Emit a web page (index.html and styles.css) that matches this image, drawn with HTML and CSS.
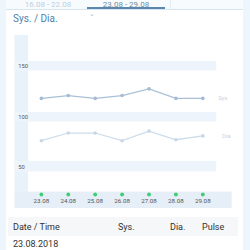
FILE: index.html
```html
<!DOCTYPE html>
<html>
<head>
<meta charset="utf-8">
<link rel="stylesheet" href="styles.css">
</head>
<body>
<div class="panel">
  <div class="tabs">
    <div class="tab">16.08 - 22.08</div>
    <div class="tab active">23.08 - 29.08</div>
    <div class="tab-rest"></div>
  </div>
  <div class="selector">
    <span class="sel-label">Sys. / Dia.</span>
    <span class="chev">&#711;</span>
  </div>
  <svg class="chart" width="237" height="182" viewBox="0 0 237 182">
    <rect x="4" y="0" width="14" height="166" fill="#e8f2fb"/>
    <rect x="4" y="27" width="210" height="10" fill="#edf4fb"/>
    <rect x="4" y="80" width="210" height="10" fill="#edf4fb"/>
    <rect x="4" y="131" width="210" height="11" fill="#edf4fb"/>
    <text x="8" y="34" class="ylab">150</text>
    <text x="8" y="87" class="ylab">100</text>
    <text x="8" y="139" class="ylab">50</text>
    <rect x="4" y="163" width="226" height="17" fill="#e6eff8"/>
    <polyline points="32,66 60,63 88,66 116,63 144,56 172,66 200,66" fill="none" stroke="#a9c0d6" stroke-width="1.3"/>
    <g fill="#a3bbd3">
      <circle cx="32" cy="66" r="1.9"/><circle cx="60" cy="63" r="1.9"/><circle cx="88" cy="66" r="1.9"/>
      <circle cx="116" cy="63" r="1.9"/><circle cx="144" cy="56" r="1.9"/><circle cx="172" cy="66" r="1.9"/><circle cx="200" cy="66" r="1.9"/>
    </g>
    <text x="216" y="68" class="slab">Sys</text>
    <polyline points="32,110 60,102 88,102 116,110 144,100 172,109 200,105" fill="none" stroke="#cddcea" stroke-width="1.3"/>
    <g fill="#c6d7e7">
      <circle cx="32" cy="110" r="1.9"/><circle cx="60" cy="102" r="1.9"/><circle cx="88" cy="102" r="1.9"/>
      <circle cx="116" cy="110" r="1.9"/><circle cx="144" cy="100" r="1.9"/><circle cx="172" cy="109" r="1.9"/><circle cx="200" cy="105" r="1.9"/>
    </g>
    <text x="220" y="107" class="dlab">Dia</text>
    <g fill="#3fcf72">
      <circle cx="32" cy="166" r="2"/><circle cx="60" cy="166" r="2"/><circle cx="88" cy="166" r="2"/>
      <circle cx="116" cy="166" r="2"/><circle cx="144" cy="166" r="2"/><circle cx="172" cy="166" r="2"/><circle cx="200" cy="166" r="2"/>
    </g>
    <g class="xlab" text-anchor="middle">
      <text x="32" y="175">23.08</text><text x="60" y="175">24.08</text><text x="88" y="175">25.08</text>
      <text x="116" y="175">26.08</text><text x="144" y="175">27.08</text><text x="172" y="175">28.08</text><text x="200" y="175">29.08</text>
    </g>
  </svg>
  <div class="table">
    <div class="thead">
      <span class="c-date">Date / Time</span>
      <span class="c-sys">Sys.</span>
      <span class="c-dia">Dia.</span>
      <span class="c-pulse">Pulse</span>
    </div>
    <div class="trow">
      <span class="c-date">23.08.2018</span>
    </div>
  </div>
</div>
</body>
</html>
```
FILE: styles.css
```css
html, body {
  margin: 0;
  padding: 0;
  background: #edf6fc;
  font-family: Roboto, "Liberation Sans", sans-serif;
  overflow: hidden;
}
.panel {
  margin-left: 6px;
  width: 237px;
  height: 250px;
  background: #ffffff;
  display: flex;
  flex-direction: column;
}
.tabs {
  display: flex;
  height: 9px;
  padding-left: 3px;
  background: #f7fbfe;
  border-bottom: 1px solid #d6e6f1;
}
.tab {
  width: 78px;
  font-size: 8px;
  line-height: 9px;
  text-align: center;
  color: #b9d0e1;
}
.tab.active {
  width: 78px;
  color: #6f8ca6;
  box-shadow: inset 0 -2px 0 #5c86ab;
}
.tab-rest {
  flex: 1;
  margin-left: 5px;
  border-left: 1px solid #e3eef6;
}
.selector {
  height: 26px;
  display: flex;
  align-items: flex-start;
  padding-left: 7px;
  padding-top: 3px;
  box-sizing: border-box;
}
.sel-label {
  font-size: 10px;
  color: #4f7fa8;
  line-height: 12px;
}
.chev {
  margin-left: 32px;
  font-size: 10px;
  color: #9bb3c8;
  line-height: 14px;
}
.chart {
  display: block;
}
.ylab {
  font-size: 6px;
  fill: #555;
  font-family: Roboto, "Liberation Sans", sans-serif;
}
.slab, .dlab {
  font-size: 6px;
  fill: #c3d3e1;
  font-family: Roboto, "Liberation Sans", sans-serif;
}
.xlab text {
  font-size: 6.5px;
  fill: #555;
  font-family: Roboto, "Liberation Sans", sans-serif;
}
.table {
  margin-top: 7px;
  margin-left: 2px;
  width: 230px;
}
.thead {
  display: flex;
  height: 19px;
  align-items: center;
  background: #f5f7f9;
  font-size: 9px;
  color: #333;
}
.trow {
  display: flex;
  padding-top: 3px;
  font-size: 9px;
  line-height: 11px;
  color: #333;
}
.c-date { width: 110px; padding-left: 5px; box-sizing: border-box; }
.c-sys { width: 52px; }
.c-dia { width: 32px; }
.c-pulse { flex: 1; }
```
